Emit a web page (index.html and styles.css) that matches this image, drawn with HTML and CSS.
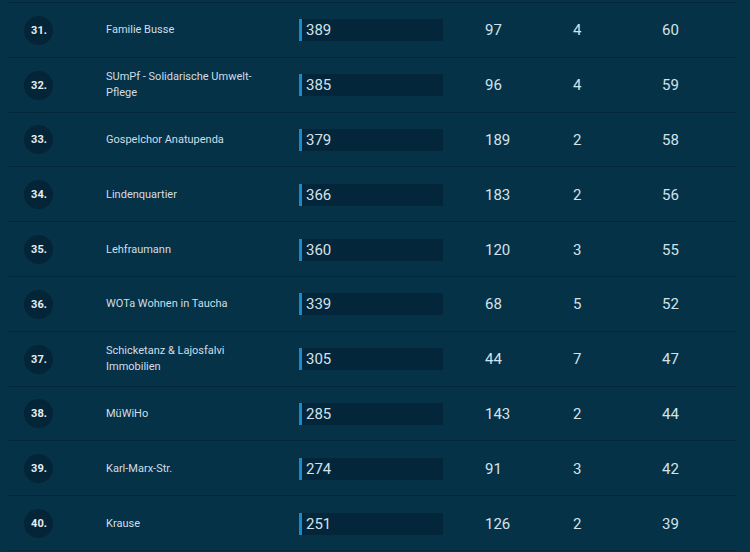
FILE: index.html
```html
<!DOCTYPE html>
<html lang="de">
<head>
<meta charset="utf-8">
<link rel="stylesheet" href="styles.css">
</head>
<body>
<div class="list">
  <div class="row"><div class="rank"><span>31.</span></div><div class="name">Familie Busse</div><div class="barcell"><div class="bar">389</div></div><div class="num">97</div><div class="num">4</div><div class="num">60</div></div>
  <div class="row"><div class="rank"><span>32.</span></div><div class="name">SUmPf - Solidarische Umwelt-Pflege</div><div class="barcell"><div class="bar">385</div></div><div class="num">96</div><div class="num">4</div><div class="num">59</div></div>
  <div class="row"><div class="rank"><span>33.</span></div><div class="name">Gospelchor Anatupenda</div><div class="barcell"><div class="bar">379</div></div><div class="num">189</div><div class="num">2</div><div class="num">58</div></div>
  <div class="row"><div class="rank"><span>34.</span></div><div class="name">Lindenquartier</div><div class="barcell"><div class="bar">366</div></div><div class="num">183</div><div class="num">2</div><div class="num">56</div></div>
  <div class="row"><div class="rank"><span>35.</span></div><div class="name">Lehfraumann</div><div class="barcell"><div class="bar">360</div></div><div class="num">120</div><div class="num">3</div><div class="num">55</div></div>
  <div class="row"><div class="rank"><span>36.</span></div><div class="name">WOTa Wohnen in Taucha</div><div class="barcell"><div class="bar">339</div></div><div class="num">68</div><div class="num">5</div><div class="num">52</div></div>
  <div class="row"><div class="rank"><span>37.</span></div><div class="name">Schicketanz &amp; Lajosfalvi Immobilien</div><div class="barcell"><div class="bar">305</div></div><div class="num">44</div><div class="num">7</div><div class="num">47</div></div>
  <div class="row"><div class="rank"><span>38.</span></div><div class="name">MüWiHo</div><div class="barcell"><div class="bar">285</div></div><div class="num">143</div><div class="num">2</div><div class="num">44</div></div>
  <div class="row"><div class="rank"><span>39.</span></div><div class="name">Karl-Marx-Str.</div><div class="barcell"><div class="bar">274</div></div><div class="num">91</div><div class="num">3</div><div class="num">42</div></div>
  <div class="row"><div class="rank"><span>40.</span></div><div class="name">Krause</div><div class="barcell"><div class="bar">251</div></div><div class="num">126</div><div class="num">2</div><div class="num">39</div></div>
</div>
</body>
</html>
```
FILE: styles.css
```css
html, body {
  margin: 0;
  padding: 0;
  background: #063247;
  height: 100%;
  overflow: hidden;
}
body {
  padding: 2px 13px 0 8px;
  font-family: Roboto, "Liberation Sans", sans-serif;
  color: #d3e2ea;
}
.list {
  border-top: 1px solid #03283b;
}
.row {
  display: grid;
  grid-template-columns: 82px 193px 186px 88px 89px 1fr;
  align-items: center;
  height: 53.8px;
  box-sizing: border-box;
  height: 54.8px;
  border-bottom: 1px solid #03283b;
  padding-left: 16px;
  padding-top: 1px;
}
.rank span {
  display: flex;
  align-items: center;
  justify-content: center;
  width: 29px;
  height: 29px;
  border-radius: 50%;
  background: #042537;
  font-size: 11px;
  font-weight: 700;
  color: #e6eef2;
  padding-left: 1px;
  box-sizing: border-box;
}
.name {
  font-size: 11px;
  line-height: 16px;
  width: 160px;
  color: #cfdee6;
}
.bar {
  width: 144px;
  height: 22px;
  box-sizing: border-box;
  border-left: 3px solid #1b8acb;
  background: #03263a;
  font-size: 15px;
  line-height: 22px;
  padding-left: 4px;
}
.num {
  font-size: 15px;
}
```
